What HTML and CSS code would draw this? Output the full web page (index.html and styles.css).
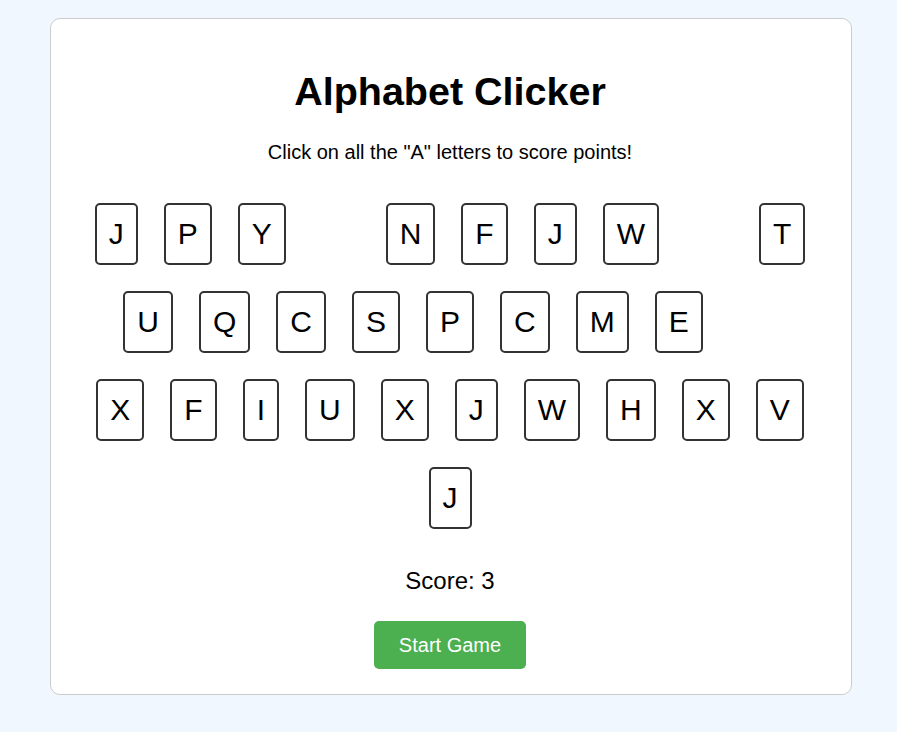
FILE: index.html
```html
<!DOCTYPE html>
<html lang="en">
<head>
<meta charset="utf-8">
<title>Alphabet Clicker</title>
<link rel="stylesheet" href="styles.css">
</head>
<body>
<main class="card">
  <h1 class="title">Alphabet Clicker</h1>
  <p class="subtitle">Click on all the "A" letters to score points!</p>
  <div class="letters">
    <span class="letter">J</span>
    <span class="letter">P</span>
    <span class="letter">Y</span>
    <span class="letter hidden">A</span>
    <span class="letter">N</span>
    <span class="letter">F</span>
    <span class="letter">J</span>
    <span class="letter">W</span>
    <span class="letter hidden">A</span>
    <span class="letter">T</span>
    <span class="letter">U</span>
    <span class="letter">Q</span>
    <span class="letter">C</span>
    <span class="letter">S</span>
    <span class="letter">P</span>
    <span class="letter">C</span>
    <span class="letter">M</span>
    <span class="letter">E</span>
    <span class="letter hidden">A</span>
    <span class="letter">X</span>
    <span class="letter">F</span>
    <span class="letter">I</span>
    <span class="letter">U</span>
    <span class="letter">X</span>
    <span class="letter">J</span>
    <span class="letter">W</span>
    <span class="letter">H</span>
    <span class="letter">X</span>
    <span class="letter">V</span>
    <span class="letter">J</span>
  </div>
  <p class="score">Score: 3</p>
  <button class="start">Start Game</button>
</main>
</body>
</html>
```

FILE: styles.css
```css
html, body {
  margin: 0;
  padding: 0;
}

body {
  background: #f0f7fe;
  font-family: "Liberation Sans", Arial, sans-serif;
  color: #000;
  padding-top: 18px;
  padding-bottom: 38px;
}

.card {
  box-sizing: border-box;
  width: 802px;
  margin-left: 50px;
  background: #ffffff;
  border: 1px solid #cccccc;
  border-radius: 10px;
  padding: 20px 41px 25px 39px;
  text-align: center;
  display: flex;
  flex-direction: column;
  align-items: center;
}

.title {
  margin: 30px 0 0;
  font-size: 39.5px;
  line-height: 45px;
  font-weight: bold;
}

.subtitle {
  margin: 27px 0 0;
  font-size: 20px;
  line-height: 23px;
}

.letters {
  margin-top: 39px;
  width: 100%;
  display: flex;
  flex-wrap: wrap;
  justify-content: center;
  gap: 26px;
}

.letter {
  display: inline-block;
  font-size: 30px;
  line-height: 34px;
  padding: 12px;
  border: 2px solid #333333;
  border-radius: 5px;
  color: #000;
}

.letter.hidden {
  visibility: hidden;
}

.score {
  margin: 38px 0 0;
  font-size: 24px;
  line-height: 28px;
}

.start {
  margin-top: 26px;
  font-family: "Liberation Sans", Arial, sans-serif;
  font-size: 20px;
  line-height: 24px;
  height: 48px;
  padding: 0 25px;
  border: none;
  border-radius: 5px;
  background: #4caf50;
  color: #ffffff;
  cursor: pointer;
}
```
